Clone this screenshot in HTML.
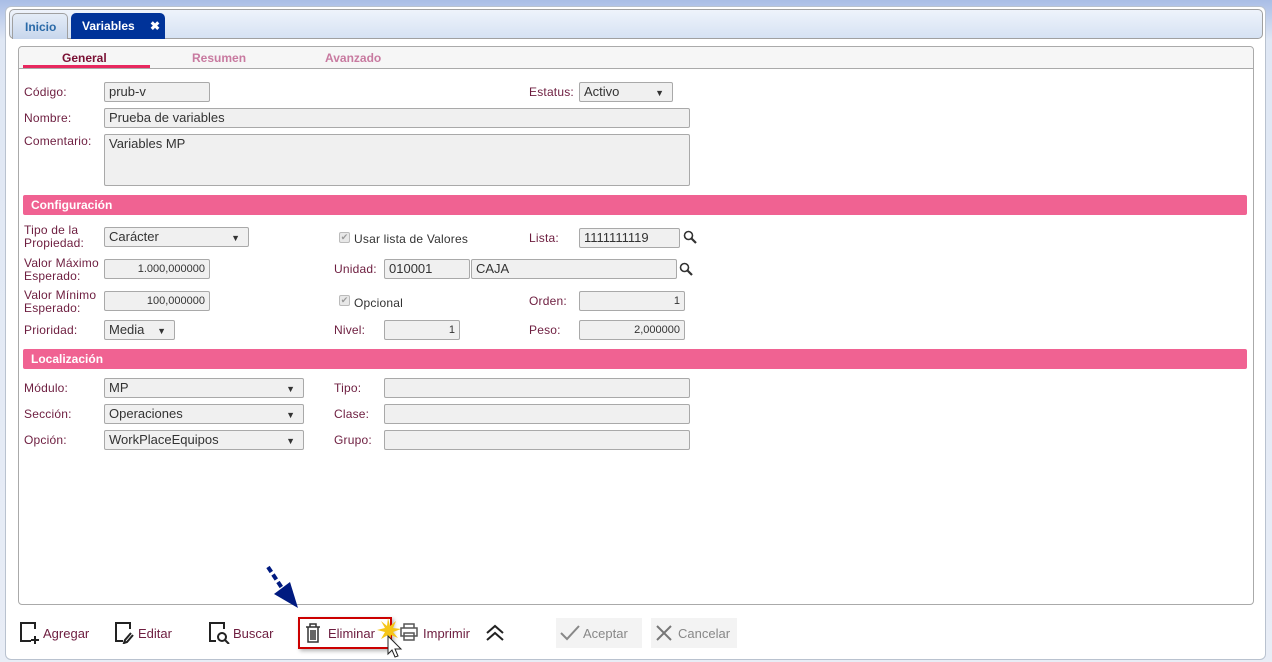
<!DOCTYPE html>
<html><head><meta charset="utf-8"><style>
*{box-sizing:border-box;margin:0;padding:0}
body{width:1272px;height:662px;background:linear-gradient(#a9bde6,#dfe7f4 40px,#e8edf6);font-family:"Liberation Sans",sans-serif;position:relative;overflow:hidden}
.a{position:absolute}
.outer{left:5px;top:6px;width:1261px;height:654px;background:#fff;border:1px solid #b9c2cf;border-radius:6px}
.strip{left:9px;top:9px;width:1254px;height:30px;background:linear-gradient(#eef3fb,#d6e2f3);border:1px solid #a0a0a0;border-radius:5px}
.tab{top:13px;height:26px;border-radius:5px 5px 0 0;font-size:12px;font-weight:bold;line-height:26px}
.panel{left:18px;top:46px;width:1236px;height:559px;border:1px solid #aaa;border-radius:4px;background:#fff}
.ph{left:19px;top:47px;width:1234px;height:22px;background:#f6f6f6;border-bottom:1px solid #aaa;border-radius:4px 4px 0 0}
.tt{top:51px;font-size:12px;font-weight:bold;color:#c87aa0}
.lb{font-size:12px;color:#6d1d3f;letter-spacing:.2px}
.in{background:#f0f0f0;border:1px solid #a9a9a9;border-radius:2px;height:20px;font-size:13px;color:#333;padding:1px 4px;line-height:16px}
.r{text-align:right;font-size:11px;line-height:17px}
.sel:after{content:"▼";position:absolute;right:8px;top:2px;font-size:9px;color:#333}
.bar{left:23px;width:1224px;height:20px;background:#f06292;color:#fff;font-size:12px;font-weight:bold;padding:3px 8px;border-radius:2px}
.btn{top:626px;font-size:13px;color:#6d1d3f}
.chk{width:11px;height:11px;border:1px solid #bbb;background:#e8e8e8;border-radius:2px;font-size:9px;color:#999;line-height:9px;text-align:center}
</style></head><body>
<div class="a outer"></div>
<div class="a strip"></div>
<div class="a tab" style="left:12px;width:56px;background:linear-gradient(#e4ecf7,#c7d6ec);border:1px solid #a0a0a0;border-bottom:none;color:#2a6aa8;padding-left:12px">Inicio</div>
<div class="a tab" style="left:71px;width:94px;background:#003399;color:#fff;padding-left:11px">Variables <span style="margin-left:12px">✖</span></div>
<div class="a panel"></div>
<div class="a ph"></div>
<div class="a tt" style="left:62px;color:#7a1034">General</div>
<div class="a" style="left:23px;top:65px;width:127px;height:3px;background:#e8285f"></div>
<div class="a tt" style="left:192px">Resumen</div>
<div class="a tt" style="left:325px">Avanzado</div>

<div class="a lb" style="left:24px;top:85px">Código:</div>
<div class="a in" style="left:104px;top:82px;width:106px">prub-v</div>
<div class="a lb" style="left:529px;top:85px">Estatus:</div>
<div class="a in sel" style="left:579px;top:82px;width:94px">Activo</div>
<div class="a lb" style="left:24px;top:111px">Nombre:</div>
<div class="a in" style="left:104px;top:108px;width:586px">Prueba de variables</div>
<div class="a lb" style="left:24px;top:134px">Comentario:</div>
<div class="a in" style="left:104px;top:134px;width:586px;height:52px">Variables MP</div>

<div class="a bar" style="top:195px">Configuración</div>
<div class="a lb" style="left:24px;top:224px;line-height:13px">Tipo de la<br>Propiedad:</div>
<div class="a in sel" style="left:104px;top:227px;width:145px">Carácter</div>
<div class="a chk" style="left:339px;top:232px">✔</div>
<div class="a lb" style="left:354px;top:232px;color:#333">Usar lista de Valores</div>
<div class="a lb" style="left:529px;top:231px">Lista:</div>
<div class="a in" style="left:579px;top:228px;width:101px">1111111119</div>
<svg class="a" style="left:683px;top:230px" width="14" height="14"><circle cx="5.5" cy="5.5" r="4" stroke="#333" stroke-width="1.6" fill="none"/><path d="M8.5 8.5l4.5 4.5" stroke="#333" stroke-width="2.2"/></svg>
<div class="a lb" style="left:24px;top:257px;line-height:13px">Valor Máximo<br>Esperado:</div>
<div class="a in r" style="left:104px;top:259px;width:106px">1.000,000000</div>
<div class="a lb" style="left:334px;top:262px">Unidad:</div>
<div class="a in" style="left:384px;top:259px;width:86px">010001</div>
<div class="a in" style="left:471px;top:259px;width:206px">CAJA</div>
<svg class="a" style="left:679px;top:262px" width="14" height="14"><circle cx="5.5" cy="5.5" r="4" stroke="#333" stroke-width="1.6" fill="none"/><path d="M8.5 8.5l4.5 4.5" stroke="#333" stroke-width="2.2"/></svg>
<div class="a lb" style="left:24px;top:289px;line-height:13px">Valor Mínimo<br>Esperado:</div>
<div class="a in r" style="left:104px;top:291px;width:106px">100,000000</div>
<div class="a chk" style="left:339px;top:295px">✔</div>
<div class="a lb" style="left:354px;top:296px;color:#333">Opcional</div>
<div class="a lb" style="left:529px;top:294px">Orden:</div>
<div class="a in r" style="left:579px;top:291px;width:106px">1</div>
<div class="a lb" style="left:24px;top:323px">Prioridad:</div>
<div class="a in sel" style="left:104px;top:320px;width:71px">Media</div>
<div class="a lb" style="left:334px;top:323px">Nivel:</div>
<div class="a in r" style="left:384px;top:320px;width:76px">1</div>
<div class="a lb" style="left:529px;top:323px">Peso:</div>
<div class="a in r" style="left:579px;top:320px;width:106px">2,000000</div>

<div class="a bar" style="top:349px">Localización</div>
<div class="a lb" style="left:24px;top:381px">Módulo:</div>
<div class="a in sel" style="left:104px;top:378px;width:200px">MP</div>
<div class="a lb" style="left:334px;top:381px">Tipo:</div>
<div class="a in" style="left:384px;top:378px;width:306px"></div>
<div class="a lb" style="left:24px;top:407px">Sección:</div>
<div class="a in sel" style="left:104px;top:404px;width:200px">Operaciones</div>
<div class="a lb" style="left:334px;top:407px">Clase:</div>
<div class="a in" style="left:384px;top:404px;width:306px"></div>
<div class="a lb" style="left:24px;top:433px">Opción:</div>
<div class="a in sel" style="left:104px;top:430px;width:200px">WorkPlaceEquipos</div>
<div class="a lb" style="left:334px;top:433px">Grupo:</div>
<div class="a in" style="left:384px;top:430px;width:306px"></div>

<svg class="a" style="left:260px;top:560px" width="44" height="52"><path d="M8 7 L22 28" stroke="#001a80" stroke-width="4" stroke-dasharray="6 3"/><path d="M38 48 L14 34 L30 22 Z" fill="#001a80"/></svg>

<svg class="a" style="left:20px;top:622px" width="20" height="22"><path d="M15 7V1H1v18h10M15 14v8M11 18h8" stroke="#222" stroke-width="2" fill="none"/></svg>
<div class="a btn" style="left:43px">Agregar</div>
<svg class="a" style="left:115px;top:622px" width="20" height="22"><path d="M15 7V1H1v18h7M16 11l-6 7-1 3 3-1 6-7" stroke="#222" stroke-width="2" fill="none"/></svg>
<div class="a btn" style="left:138px">Editar</div>
<svg class="a" style="left:209px;top:622px" width="22" height="22"><path d="M15 7V1H1v18h6" stroke="#222" stroke-width="2" fill="none"/><circle cx="13" cy="15" r="4" stroke="#222" stroke-width="2" fill="none"/><path d="M16 18l4 4" stroke="#222" stroke-width="2"/></svg>
<div class="a btn" style="left:233px">Buscar</div>
<div class="a" style="left:298px;top:617px;width:94px;height:32px;border:2px solid #c00;box-shadow:2px 2px 4px rgba(0,0,0,.3)"></div>
<svg class="a" style="left:305px;top:623px" width="16" height="20"><path d="M1 4h14M5 4V1h6v3M3 4v15h10V4M6 7v10M8 7v10M10 7v10" stroke="#333" stroke-width="1.5" fill="none"/></svg>
<div class="a btn" style="left:328px">Eliminar</div>
<svg class="a" style="left:376px;top:616px" width="30" height="44"><path d="M12 2l2 8 6-5-3 7 8 1-8 3 5 6-7-3-1 8-2-8-7 4 4-7-8-2 8-2-4-7 6 5z" fill="#f5c518"/><path d="M12 20v18l4-4 3 7 3-1-3-7h6z" fill="#fff" stroke="#222"/></svg>
<svg class="a" style="left:400px;top:623px" width="18" height="18"><path d="M4 5V1h10v4M1 5h16v8H1zM4 10h10v7H4z" stroke="#555" stroke-width="1.5" fill="#fff"/></svg>
<div class="a btn" style="left:423px">Imprimir</div>
<svg class="a" style="left:485px;top:624px" width="20" height="18"><path d="M2 9l8-7 8 7M2 16l8-7 8 7" stroke="#222" stroke-width="2" fill="none"/></svg>
<div class="a" style="left:556px;top:618px;width:86px;height:30px;background:#f3f3f3"></div>
<svg class="a" style="left:560px;top:625px" width="20" height="16"><path d="M1 8l6 6L19 1" stroke="#888" stroke-width="2" fill="none"/></svg>
<div class="a btn" style="left:583px;color:#888">Aceptar</div>
<div class="a" style="left:651px;top:618px;width:86px;height:30px;background:#f3f3f3"></div>
<svg class="a" style="left:655px;top:624px" width="18" height="18"><path d="M2 2l14 14M16 2L2 16" stroke="#777" stroke-width="2"/></svg>
<div class="a btn" style="left:678px;color:#888">Cancelar</div>
</body></html>
